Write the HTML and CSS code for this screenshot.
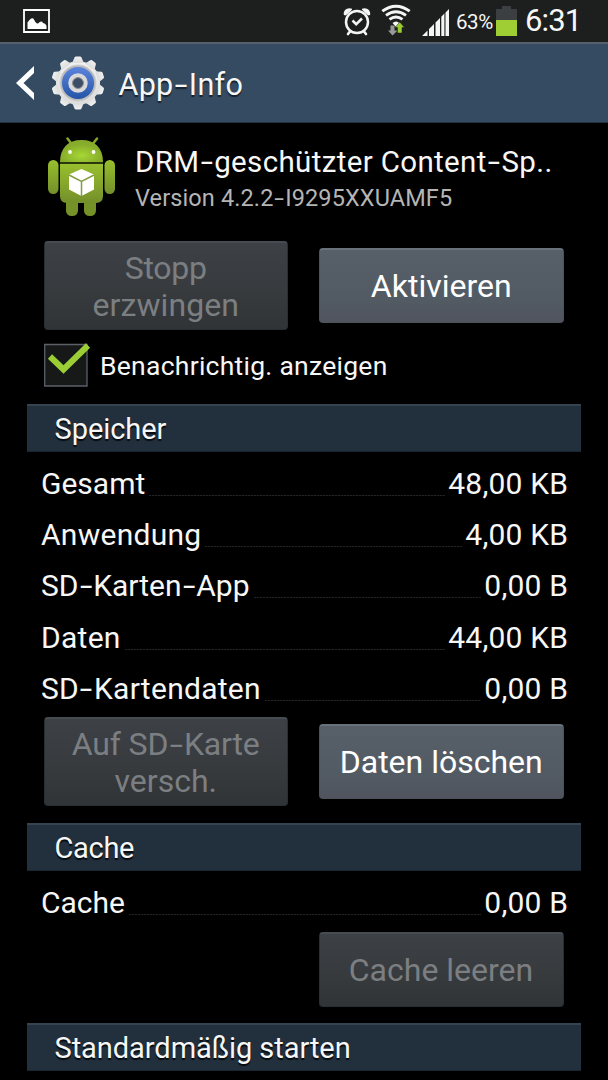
FILE: index.html
```html
<!DOCTYPE html>
<html lang="de">
<head>
<meta charset="utf-8">
<title>App-Info</title>
<link rel="stylesheet" href="styles.css">
</head>
<body>
<div class="status">
  <svg class="picture" width="28" height="25" viewBox="0 0 28 25"><path d="M1 1H26V23H1Z" fill="none" stroke="#fff" stroke-width="1.8"/><path d="M4.500 20V13.500Q9 7 11 10.500Q13 15 15 14.500Q18.500 11 20 14Q23.500 15 23.500 17.500V20Z" fill="#fff"/></svg>
  <svg class="alarm" width="28" height="30" viewBox="0 0 28 30"><g fill="none" stroke="#f5f5f5" stroke-linecap="round"><circle cx="14" cy="16" r="11" stroke-width="2.500"/><path d="M9.500 14.500L13.200 18.200L19 12.500" stroke-width="2.500" stroke-linecap="butt"/><path d="M7 25.500L5 28M21 25.500L23 28" stroke-width="2.600"/></g><path d="M.8 8.600C0 4 5 .7 9 2.800Q9.500 4 8 4.800L3.300 9Q1.500 10 .8 8.600ZM27.200 8.600C28 4 23 .7 19 2.800Q18.500 4 20 4.800L24.700 9Q26.500 10 27.200 8.600Z" fill="#f5f5f5"/></svg>
  <svg class="wifi" width="30" height="32" viewBox="0 0 30 32"><g fill="none" stroke="#f5f5f5" stroke-width="2.900"><path d="M1.300 7.200Q15 -2.800 28.700 7.200M5 11.300Q15 4 25 11.300M8.500 15.300Q15 10.500 21.500 15.300"/></g><path d="M11.500 19Q15 16 18.500 19L15 23Z" fill="#f5f5f5"/><path d="M9.500 21.500H13.500V26.500H16.500L11.500 31.500L7 26.500H9.500Z" fill="#999"/><path d="M18.800 18L23.500 23.500H21V29H16.500V23.500H14Z" fill="#9acb31" stroke="#1d1f1f" stroke-width=".5"/></svg>
  <svg class="signal" width="28" height="28" viewBox="0 0 28 28"><path d="M0 27L5.500 21.500V27ZM7 20L12 15V27H7ZM13.500 13.500L18 9V27H13.500ZM19.300 7.700L22.400 4.600V27H19.300ZM23.500 3.500L27 0V27H23.500Z" fill="#f5f5f5"/></svg>
  <span class="percent">63%</span>
  <svg class="battery" width="21" height="30" viewBox="0 0 21 30"><path d="M0 3H6V0H15V3H21V14H0Z" fill="#3c3f42"/><path d="M0 14H21V30H0Z" fill="#9fce34"/></svg>
  <span class="clock">6:31</span>
</div>
<header class="bar">
  <svg class="back" width="19" height="34" viewBox="0 0 19 34"><path d="M18 0V7L7.500 17L18 27V34L0 17Z" fill="#fff"/></svg>
  <svg class="gear" width="54" height="54" viewBox="-27 -27 54 54">
    <defs><linearGradient id="blue" x2="0" y2="1"><stop stop-color="#5c85dc"/><stop offset="1" stop-color="#2454a7"/></linearGradient><linearGradient id="metal" x2="0" y2="1"><stop stop-color="#f1f1f1"/><stop offset="1" stop-color="#dcdcdc"/></linearGradient><path id="tooth" d="M-5.800 -20L-3.500 -25.600Q-3 -26.600 -2 -26.600H2Q3 -26.600 3.500 -25.600L5.800 -20Z"/></defs>
    <g fill="url(#metal)"><circle r="22"/><use href="#tooth"/><use href="#tooth" transform="rotate(36)"/><use href="#tooth" transform="rotate(72)"/><use href="#tooth" transform="rotate(108)"/><use href="#tooth" transform="rotate(144)"/><use href="#tooth" transform="rotate(180)"/><use href="#tooth" transform="rotate(216)"/><use href="#tooth" transform="rotate(252)"/><use href="#tooth" transform="rotate(288)"/><use href="#tooth" transform="rotate(324)"/></g>
    <circle r="18" fill="#b9b9b9" stroke="#d0d0d0"/><circle r="16" fill="url(#blue)"/><circle r="7.500" fill="#3c4e68" stroke="#d9d9d9" stroke-width="4.500"/><circle r="5.500" fill="none" stroke="#888" stroke-width="1"/>
  </svg>
  <h1>App<span class="hy">-</span>Info</h1>
</header>
<main>
  <section class="app">
    <svg class="android" width="70" height="82" viewBox="0 0 70 82">
      <defs><linearGradient id="body" x2="0" y2="1"><stop stop-color="#98bf2e"/><stop offset="1" stop-color="#738f2a"/></linearGradient><radialGradient id="head" cy=".7"><stop stop-color="#a6d735"/><stop offset="1" stop-color="#87ac2b"/></radialGradient></defs>
      <path d="M19.500 1.500L24.500 8M49 1.500L44 8" stroke="#86a52b" stroke-width="2.500" stroke-linecap="round"/>
      <rect x="18" y="55" width="12" height="24" rx="5.500" fill="#759229"/><rect x="36" y="55" width="12" height="24" rx="5.500" fill="#759229"/>
      <rect x="0" y="23" width="10.500" height="34" rx="5.200" fill="url(#body)"/><rect x="56.500" y="23" width="10.500" height="34" rx="5.200" fill="url(#body)"/>
      <path d="M12 27H55V59Q55 66 48 66H19Q12 66 12 59Z" fill="url(#body)"/>
      <path d="M12 25C12 11 20 3 33.500 3S55 11 55 25Z" fill="url(#head)"/>
      <path d="M12 26H55" stroke="#3a4b11" stroke-width="1.500"/><circle cx="22" cy="15" r="1.900" fill="#fff"/><circle cx="45.500" cy="15" r="1.900" fill="#fff"/>
      <path d="M33.500 32L46 37.500V52.500L33.500 59L21 52.500V37.500Z" fill="#fff"/><path d="M21 38L33.500 44.500L46 38M33.500 44.500V59" fill="none" stroke="#839c42" stroke-width="1.500"/>
    </svg>
    <div class="names"><h2>DRM<span class="hy">-</span>geschützter Content<span class="hy">-</span>Sp..</h2><p>Version 4.2.2<span class="hy">-</span>I9295XXUAMF5</p></div>
  </section>
  <div class="buttons"><button class="btn tall" disabled><span class="stop">Stopp</span><br><span class="force">erzwingen</span></button><button class="btn"><span>Aktivieren</span></button></div>
  <label class="notify"><svg width="48" height="44" viewBox="0 0 48 44"><path d="M.7 1.500H43V43H.7Z" fill="#171919" stroke="#5b6068" stroke-width="1.300"/><path d="M6 13.500L19.500 26.500L44 2.500" fill="none" stroke="#9bcd35" stroke-width="6"/></svg><span>Benachrichtig. anzeigen</span></label>
  <h3>Speicher</h3>
  <dl class="rows">
    <div><dt>Gesamt</dt><i></i><dd>48,00 KB</dd></div>
    <div><dt class="wide">Anwendung</dt><i></i><dd>4,00 KB</dd></div>
    <div><dt>SD<span class="hy">-</span>Karten<span class="hy">-</span>App</dt><i></i><dd>0,00 B</dd></div>
    <div><dt class="wide">Daten</dt><i></i><dd>44,00 KB</dd></div>
    <div><dt class="wide">SD<span class="hy">-</span>Kartendaten</dt><i></i><dd>0,00 B</dd></div>
  </dl>
  <div class="buttons"><button class="btn tall" disabled><span class="move">Auf SD<span class="hy">-</span>Karte</span><br><span>versch.</span></button><button class="btn"><span>Daten löschen</span></button></div>
  <h3 class="cache">Cache</h3>
  <dl class="rows cache-row"><div><dt>Cache</dt><i></i><dd>0,00 B</dd></div></dl>
  <div class="buttons clear"><button class="btn" disabled><span>Cache leeren</span></button></div>
  <h3 class="launch">Standardmäßig starten</h3>
</main>
</body>
</html>
```
FILE: styles.css
```css
* { box-sizing: border-box; margin: 0; padding: 0; }
body { width: 608px; height: 1080px; overflow: hidden; background: #000; color: #f7f7f7; font-family: Roboto, sans-serif; font-weight: 400; }
svg { display: block; flex: none; }
h1, h2, h3 { font-weight: 400; white-space: nowrap; }
.hy { display: inline-block; margin: 0 .107em; transform: scaleX(1.5); }

.status { height: 44px; display: flex; align-items: flex-start; background: #1d1f1f; border-bottom: 2px solid #56616d; }
.picture { margin: 9px 0 0 23px; }
.alarm { margin: 6px 0 0 292px; }
.wifi { margin: 4px 0 0 10px; }
.signal { margin: 9px 0 0 11px; }
.percent { width: 39px; margin-left: 6px; font-size: 20.5px; line-height: 45px; letter-spacing: -.4px; }
.battery { margin: 6px 0 0 1px; }
.clock { margin-left: 8px; font-size: 31px; line-height: 42px; letter-spacing: -.9px; }

.bar { height: 79px; display: flex; align-items: center; padding-left: 16px; background: #344b62; border-bottom: 1px solid #24313f; }
.bar svg { margin-bottom: 1px; }
.bar .gear { margin-left: 15.5px; }
.bar h1 { margin: 3px 0 0 14px; font-size: 30.5px; line-height: 76px; letter-spacing: .3px; text-shadow: 0 2px 1px #17212b; }

.app { height: 118px; display: flex; padding: 14px 0 0 48px; }
.names { margin-left: 17px; padding-top: 6px; }
.names h2 { font-size: 29.5px; line-height: 38px; letter-spacing: .35px; }
.names p { font-size: 23.5px; line-height: 34px; letter-spacing: .12px; color: #b5b5b5; }

.buttons { height: 89px; display: flex; gap: 31px; padding: 0 44.500px 0 43.500px; align-items: center; }
.btn { width: 245px; height: 75px; padding-top: 2px; border: 1px solid #4c535a; border-top: 2px solid #68727c; border-radius: 4px; background: linear-gradient(#576069, #525b63 65%, #50545e); color: #fff; font: 400 32px/37.5px Roboto, sans-serif; white-space: nowrap; }
.tall { height: 89px; }
.btn:disabled { color: #7c7f82; background: linear-gradient(#3d4146, #373b3e 55%, #303437); border-color: #454c52 #292e32 #292e32; }
.stop { letter-spacing: -.3px; }
.force { letter-spacing: .1px; }
.move { letter-spacing: -.15px; }

.notify { height: 74px; display: flex; align-items: flex-start; padding: 13px 0 0 44px; }
.notify span { margin-left: 8px; font-size: 26.5px; line-height: 46px; letter-spacing: .26px; }

h3 { width: 554px; height: 48px; margin-left: 27px; padding-left: 27.5px; border-top: 2px solid #35434e; border-bottom: 1px solid #182631; background: #22303d; font-size: 29px; line-height: 47px; letter-spacing: -.05px; text-shadow: 0 2px 1px #070b0e; }

.rows { height: 265px; padding: 6px 40px 0 41px; font-size: 30px; }
.rows div { display: flex; height: 51.2px; line-height: 51.2px; white-space: nowrap; }
.rows i { flex: 1; height: 1px; margin: 37px 3px 0 4px; background: repeating-linear-gradient(90deg, #242424 0 2px, #0b0b0b 2px 3px); }
.rows dd { letter-spacing: .17px; }
.wide { letter-spacing: .27px; }
.cache { margin-top: 17px; letter-spacing: -.3px; }
.cache-row { height: 61px; }
.clear { height: 75px; justify-content: flex-end; }
.launch { margin-top: 16px; }
```
